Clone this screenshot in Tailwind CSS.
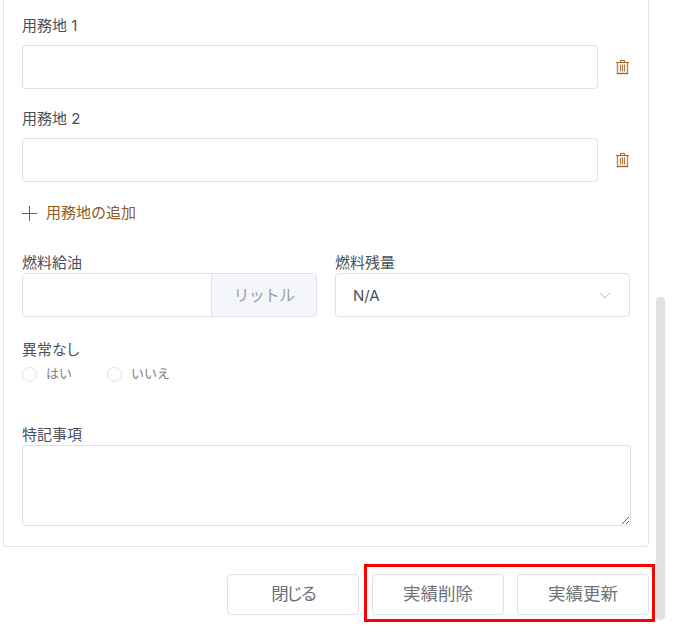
<!DOCTYPE html>
<html lang="ja">
<head>
    <meta charset="UTF-8">
    <title>実績</title>
    <script src="https://cdn.jsdelivr.net/npm/@tailwindcss/browser@4"></script>
</head>
<body class="bg-white">
    <div class="relative w-[695px] h-[635px] overflow-hidden font-['Inter','Noto_Sans_CJK_JP',sans-serif] text-[15px] text-[#4a4f57]">
        <!-- form card -->
        <div class="ml-[3px] w-[646px] h-[547px] border-x border-b border-[#e4e5ea] rounded-b-[4px] px-[18px] pt-[15px]">
            <div class="h-[20px] leading-[22px]">用務地 1</div>
            <div class="flex items-center mt-[10px]">
                <input type="text" class="w-[576px] h-[44px] border border-[#dfe0e8] rounded-[4px] bg-white">
                <svg class="ml-[17px] w-[15px] h-[16px]" viewBox="0 0 15 16" fill="none" stroke="#9a6226">
                    <path d="M1 3.5h13M5.5 3.5V1.5h4v2" stroke-width="1"/>
                    <path d="M2.5 3.5v11h10v-11" stroke-width="1.4" stroke="#b5875a"/>
                    <path d="M2 14.5h11" stroke-width="1"/>
                    <path d="M5.5 5.5v7M7.5 5.5v7M9.5 5.5v7" stroke-width="1.2" stroke="#b07a40"/>
                </svg>
            </div>
            <div class="h-[20px] leading-[22px] mt-[19px]">用務地 2</div>
            <div class="flex items-center mt-[10px]">
                <input type="text" class="w-[576px] h-[44px] border border-[#dfe0e8] rounded-[4px] bg-white">
                <svg class="ml-[17px] w-[15px] h-[16px]" viewBox="0 0 15 16" fill="none" stroke="#9a6226">
                    <path d="M1 3.5h13M5.5 3.5V1.5h4v2" stroke-width="1"/>
                    <path d="M2.5 3.5v11h10v-11" stroke-width="1.4" stroke="#b5875a"/>
                    <path d="M2 14.5h11" stroke-width="1"/>
                    <path d="M5.5 5.5v7M7.5 5.5v7M9.5 5.5v7" stroke-width="1.2" stroke="#b07a40"/>
                </svg>
            </div>
            <div class="flex items-center h-[20px] mt-[21px] text-[#8f5a1e]">
                <svg class="w-[15px] h-[15px]" viewBox="0 0 15 15" fill="none" stroke="#8f5a1e" stroke-width="1">
                    <path d="M0 7.5h15M7.5 0v15"/>
                </svg>
                <span class="ml-[9px] leading-[20px]">用務地の追加</span>
            </div>
            <div class="flex gap-[18px] mt-[29px]">
                <div class="w-[295px]">
                    <div class="h-[20px] leading-[22px]">燃料給油</div>
                    <div class="flex h-[44px] mt-px border border-[#dfe0e8] rounded-[4px] overflow-hidden">
                        <input type="text" class="flex-1 min-w-0 bg-white">
                        <div class="w-[105px] flex items-center justify-center border-l border-[#dfe0e8] bg-[#f4f6fa] text-[16px] tracking-[-0.75px] text-[#9ba0a8]">リットル</div>
                    </div>
                </div>
                <div class="w-[296px]">
                    <div class="h-[20px] leading-[22px]">燃料残量</div>
                    <div class="flex items-center justify-between h-[44px] mt-px pl-[17px] pr-[18px] border border-[#dfe0e8] rounded-[4px] bg-white">
                        <span class="pt-[2px]">N/A</span>
                        <svg class="w-[12px] h-[7px]" viewBox="0 0 12 7" fill="none" stroke="#b9bcc4" stroke-width="1">
                            <path d="M.5.5 6 6 11.5.5"/>
                        </svg>
                    </div>
                </div>
            </div>
            <div class="h-[20px] leading-[20px] mt-[23px]">異常<span class="tracking-[-1.5px]">なし</span></div>
            <div class="flex items-center h-[20px] mt-[4px] text-[13px] text-[#7d8188]">
                <span class="w-[15px] h-[15px] rounded-full border border-[#dfe0e8] bg-white"></span>
                <span class="ml-[9px]">はい</span>
                <span class="ml-[35px] w-[15px] h-[15px] rounded-full border border-[#dfe0e8] bg-white"></span>
                <span class="ml-[9px]">いいえ</span>
            </div>
            <div class="h-[20px] leading-[22px] mt-[40px]">特記事項</div>
            <textarea class="block w-[609px] h-[81px] mt-px border border-[#dfe0e8] rounded-[4px] bg-white"></textarea>
        </div>
        <!-- footer buttons -->
        <div class="flex justify-end gap-[13px] w-[649px] mt-[27px] text-[17.5px] text-[#6e7278]">
            <button class="w-[132px] h-[41px] border border-[#dfe0e8] rounded-[4px] bg-white tracking-[-3px]">閉じる</button>
            <button class="w-[132px] h-[41px] border border-[#dfe0e8] rounded-[4px] bg-white">実績削除</button>
            <button class="w-[132px] h-[41px] border border-[#dfe0e8] rounded-[4px] bg-white">実績更新</button>
        </div>
        <!-- annotation and overlay scrollbar -->
        <div class="absolute left-[364px] top-[564px] w-[291px] h-[58px] border-[3px] border-[#ff0000]"></div>
        <div class="absolute left-[656px] top-[297px] w-[9px] h-[323px] rounded-[4px] bg-[#e0e1e3]"></div>
    </div>
</body>
</html>
